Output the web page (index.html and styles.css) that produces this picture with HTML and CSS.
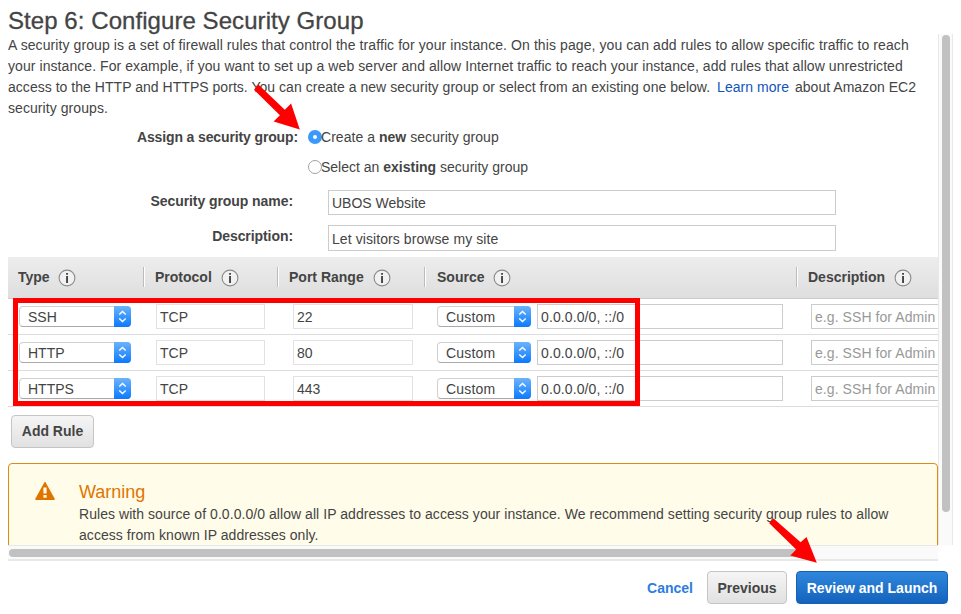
FILE: index.html
```
<!DOCTYPE html>
<html lang="en">
<head>
<meta charset="utf-8">
<title>Step 6: Configure Security Group</title>
<link rel="stylesheet" href="styles.css">
</head>
<body>
<svg class="defs" width="0" height="0">
  <symbol id="info" viewBox="0 0 18 18"><circle cx="9" cy="9" r="7.9" fill="#f1f1f1" stroke="#8b8b8b" stroke-width="1.1"/><path d="M8.1 4h1.9v1.8H8.1zM8.1 7.1H10V14H8.1z" fill="#444"/></symbol>
  <symbol id="updown" viewBox="0 0 17 21"><path d="M5.3 8.6 8.5 5.5l3.2 3.1M5.3 12.4l3.2 3.1 3.2-3.1" fill="none" stroke="#fff" stroke-width="1.4"/></symbol>
</svg>
<h1 class="title"><span class="t-title">Step 6: Configure Security Group</span></h1>
<div class="pane">
  <div class="content">
    <p class="intro">
      <span class="line l1">A security group is a set of firewall rules that control the traffic for your instance. On this page, you can add rules to allow specific traffic to reach</span>
      <span class="line l2">your instance. For example, if you want to set up a web server and allow Internet traffic to reach your instance, add rules that allow unrestricted</span>
      <span class="line l3">access to the HTTP and HTTPS ports. You can create a new security group or select from an existing one below. <a class="learn">Learn more</a> about Amazon EC2</span>
      <span class="line l4">security groups.</span>
    </p>
    <div class="assign">
      <b class="assign-label">Assign a security group:</b>
      <div class="choices">
        <label class="choice c1"><i class="radio on"></i><span>Create a <b>new</b> security group</span></label>
        <label class="choice"><i class="radio"></i><span>Select an <b>existing</b> security group</span></label>
      </div>
    </div>
    <div class="field"><b class="field-label">Security group name:</b><div class="input wide">UBOS Website</div></div>
    <div class="field second"><b class="field-label">Description:</b><div class="input wide low">Let visitors browse my site</div></div>

    <div class="rules">
      <div class="row head">
        <div class="cell"><b>Type</b><svg class="info"><use href="#info"/></svg></div>
        <div class="cell"><b>Protocol</b><svg class="info"><use href="#info"/></svg></div>
        <div class="cell"><b>Port Range</b><svg class="info"><use href="#info"/></svg></div>
        <div class="cell"><b>Source</b><svg class="info"><use href="#info"/></svg></div>
        <div class="cell"><b>Description</b><svg class="info"><use href="#info"/></svg></div>
      </div>
      <div class="row rule">
        <div class="type"><div class="select"><span>SSH</span><svg class="knob"><use href="#updown"/></svg></div></div>
        <div class="proto"><div class="input dim">TCP</div></div>
        <div class="port"><div class="input dim">22</div></div>
        <div class="source"><div class="select"><span>Custom</span><svg class="knob"><use href="#updown"/></svg></div><div class="input ip">0.0.0.0/0, ::/0</div></div>
        <div class="desc"><div class="input hint">e.g. SSH for Admin</div></div>
      </div>
      <div class="row rule">
        <div class="type"><div class="select"><span>HTTP</span><svg class="knob"><use href="#updown"/></svg></div></div>
        <div class="proto"><div class="input dim">TCP</div></div>
        <div class="port"><div class="input dim">80</div></div>
        <div class="source"><div class="select"><span>Custom</span><svg class="knob"><use href="#updown"/></svg></div><div class="input ip">0.0.0.0/0, ::/0</div></div>
        <div class="desc"><div class="input hint">e.g. SSH for Admin</div></div>
      </div>
      <div class="row rule">
        <div class="type"><div class="select"><span>HTTPS</span><svg class="knob"><use href="#updown"/></svg></div></div>
        <div class="proto"><div class="input dim">TCP</div></div>
        <div class="port"><div class="input dim">443</div></div>
        <div class="source"><div class="select"><span>Custom</span><svg class="knob"><use href="#updown"/></svg></div><div class="input ip">0.0.0.0/0, ::/0</div></div>
        <div class="desc"><div class="input hint">e.g. SSH for Admin</div></div>
      </div>
      <div class="highlight"></div>
    </div>
    <div class="btn add"><span>Add Rule</span></div>
    <div class="warning">
      <svg class="warn-icon" viewBox="0 0 20 18"><path d="M10 .8 19 17.2H1z" fill="#df7500" stroke="#df7500" stroke-width="1.6" stroke-linejoin="round"/><path d="M8.4 5.6h3.2v5.8H8.4zM8.4 12.9h3.2v2.9H8.4z" fill="#fffce9"/></svg>
      <div>
        <h2 class="warn-title">Warning</h2>
        <span class="line w1">Rules with source of 0.0.0.0/0 allow all IP addresses to access your instance. We recommend setting security group rules to allow</span>
        <span class="line w2">access from known IP addresses only.</span>
      </div>
    </div>
  </div>
  <div class="vtrack"><div class="vthumb"></div></div>
  <div class="htrack"><div class="hthumb"></div></div>
</div>
<div class="footer">
  <a class="cancel">Cancel</a>
  <div class="btn prev"><span>Previous</span></div>
  <div class="btn primary"><span>Review and Launch</span></div>
</div>
<svg class="arrows" width="961" height="614"><g fill="#f00"><path d="M258.4 84.5 284.8 109.8 291.1 103.6 299.8 129.5 273.6 121.6 279.9 115.3 254 89.7z"/><path d="M773.6 518.5 800.6 542.3 806.5 537 816.8 562.8 790.3 555.6 796.2 549.4 769 523z"/></g></svg>
</body>
</html>
```
FILE: styles.css
```
* { box-sizing: border-box; }
body { margin: 0; width: 961px; height: 614px; overflow: hidden; background: #fff; color: #444; font: 14px/21px "Liberation Sans", Arial, sans-serif; }
.defs { display: block; }
.title { margin: 0; height: 34px; padding: 5px 0 0 8px; font-size: 24px; line-height: 32px; font-weight: 400; white-space: nowrap; letter-spacing: 0.065px; -webkit-text-stroke: 0.3px #444; }
.pane { margin-left: 8px; width: 945px; height: 527px; display: grid; grid-template: 511px 16px / 930px 15px; }
.content { overflow: hidden; }
.intro { margin: 0; padding-top: 1px; }
.line { display: block; width: max-content; white-space: pre; }
.l1 { letter-spacing: 0.087px; }
.l2 { letter-spacing: 0.07px; }
.l3 { letter-spacing: 0.033px; }
.l4 { letter-spacing: 0.07px; }
.w1 { letter-spacing: 0.054px; }
.w2 { letter-spacing: 0.055px; }
.learn { color: #1155bb; margin: 0 2px 0 3px; }
.assign { display: flex; margin-top: 7px; }
.assign-label { width: 290px; text-align: right; line-height: 22px; white-space: nowrap; letter-spacing: -0.13px; }
.choices { padding-left: 10px; }
.choice { display: flex; align-items: center; height: 22px; margin-bottom: 8px; white-space: nowrap; }
.c1 { letter-spacing: 0.04px; }
.radio { width: 14px; height: 14px; margin-right: -1px; border: 1px solid #a2a2a2; border-radius: 50%; background: #fff; }
.radio.on { border: 5px solid #3a99fc; }
.field { display: flex; height: 25px; margin-top: 4px; }
.field.second { margin-top: 10px; height: 26px; }
.field-label { width: 285px; margin-right: 35px; text-align: right; line-height: 22px; white-space: nowrap; letter-spacing: -0.07px; }
.input { height: 25px; border: 1px solid #ccc; padding-left: 3px; line-height: 24px; white-space: nowrap; background: #fff; }
.input.wide { width: 508px; height: 100%; line-height: 25px; }
.input.low { line-height: 27px; letter-spacing: 0.08px; }
.rules { position: relative; margin-top: 6px; width: 1100px; }
.row { display: grid; grid-template-columns: 136px 134px 147px 372px 1fr; }
.head { height: 42px; border-bottom: 1px solid #ccc; background: linear-gradient(#ededed, #dedede); }
.cell { display: flex; align-items: center; height: 20px; margin-top: 10px; padding-left: 10px; border-left: 1px solid #fff; box-shadow: -1px 0 #bbb; }
.cell:first-child { border: 0; box-shadow: none; }
.cell:nth-child(4) { padding-left: 11px; }
.cell:first-child .info { margin-left: 8px; }
.info { width: 18px; height: 18px; margin: 1px 0 0 9px; }
.rule { height: 36px; border-bottom: 1px solid #ddd; padding-top: 5px; }
.type { padding: 2px 0 0 11px; }
.type .select { width: 112px; }
.proto { padding-left: 12px; }
.proto .input { width: 109px; }
.port { padding-left: 15px; }
.port .input { width: 120px; }
.source { display: flex; padding-left: 12px; }
.source .select { width: 94px; margin: 2px 6px 0 0; letter-spacing: 0.2px; }
.ip { width: 246px; letter-spacing: 0.1px; }
.desc { padding-left: 14px; }
.hint { color: #999; letter-spacing: 0.07px; }
.dim { border-color: #e2e2e2; }
.select { display: flex; justify-content: space-between; height: 21px; border: 1px solid #d0d0d0; border-bottom-color: #aaa; border-radius: 4px; line-height: 20px; padding-left: 8px; background: #fff; }
.knob { width: 17px; height: 21px; margin: -1px; border-radius: 0 4px 4px 0; background: linear-gradient(#6cb3fa, #0a7aff); }
.highlight { position: absolute; left: 5px; top: 41px; width: 627px; height: 108px; border: 5px solid #f00; }
.btn { display: flex; align-items: center; justify-content: center; height: 33px; border: 1px solid #c5c5c5; border-radius: 4px; background: linear-gradient(#f5f5f5, #e1e1e1); font-weight: 700; white-space: nowrap; }
.add { width: 83px; margin: 8px 0 0 3px; }
.warning { display: flex; height: 120px; margin-top: 15px; border: 1px solid #df8a10; border-radius: 4px; background: #fffce9; padding-top: 17px; }
.warn-icon { width: 20px; height: 18px; margin: 1px 24px 0 26px; flex: none; }
.warn-title { margin: 0 0 1px; font-size: 18px; line-height: 22px; font-weight: 400; color: #df7500; }
.vtrack { border: solid #e8e8e8; border-width: 0 1px; background: #fafafa; padding: 1px 0 0 3px; }
.vthumb { width: 8px; height: 477px; border-radius: 4px; background: #c1c1c1; }
.htrack { border: solid #e8e8e8; border-width: 1px 0 2px; background: #fafafa; padding: 3px 0 0 1px; }
.hthumb { width: 793px; height: 8px; border-radius: 4px; background: #c1c1c1; }
.footer { display: flex; align-items: center; justify-content: flex-end; width: 948px; padding-top: 10px; }
.cancel { color: #2b7de1; font-weight: 700; margin-right: 14px; padding-top: 1px; }
.footer .btn { padding-top: 1px; }
.prev { width: 80px; margin-right: 9px; }
.primary { width: 152px; border-color: #1561b3; background: linear-gradient(#2f86dc, #1463bd); color: #fff; }
.arrows { position: absolute; left: 0; top: 0; pointer-events: none; }
```
